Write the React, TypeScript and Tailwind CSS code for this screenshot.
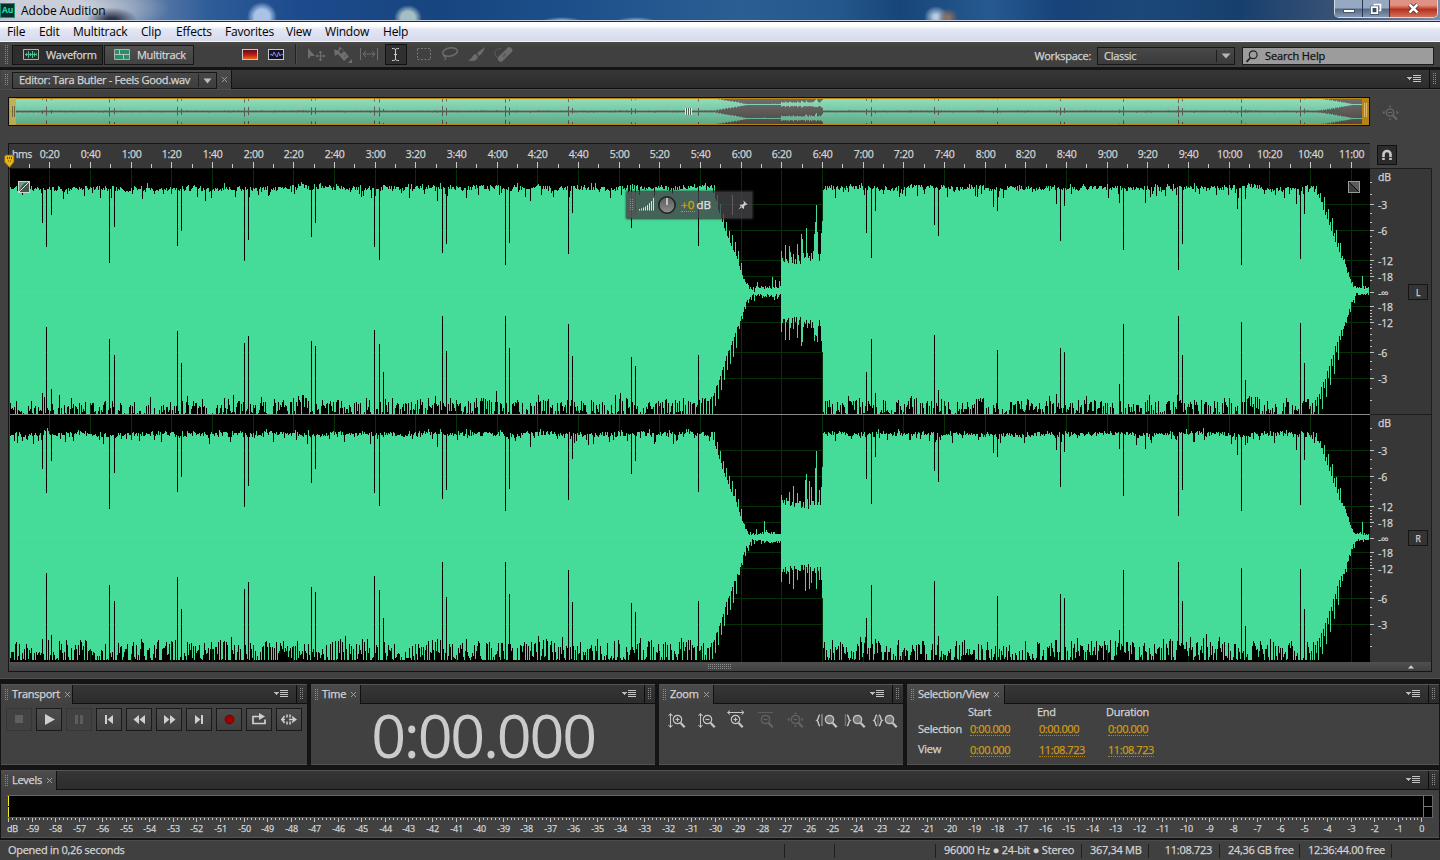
import React from 'react';

/* ---------- waveform data ---------- */

function makeRandom(seed: number) {
  let s = seed;
  return () => {
    s = (s * 1664525 + 1013904223) % 4294967296;
    return s / 4294967296;
  };
}

// x, end of the upper notch, start of the lower notch (0 = none)
const NOTCHES: number[][] = [
  [42, 223, 393], [46, 247, 327], [51, 215, 389], [59, 0, 395], [109, 263, 339], [114, 227, 355],
  [177, 246, 331], [181, 231, 363], [187, 0, 396], [244, 261, 343], [248, 240, 336], [311, 237, 341],
  [315, 223, 346], [374, 247, 330], [379, 260, 344], [383, 0, 372], [437, 201, 0], [442, 253, 316],
  [446, 244, 351], [505, 265, 316], [509, 243, 348], [530, 201, 0], [568, 254, 324], [572, 213, 356],
  [631, 228, 357], [635, 215, 366], [698, 246, 355], [866, 233, 372], [871, 258, 339], [875, 211, 393],
  [934, 225, 335], [938, 236, 390], [993, 207, 0], [997, 211, 350], [1056, 204, 394], [1060, 241, 348],
  [1064, 206, 352], [1119, 203, 384], [1123, 250, 324], [1145, 203, 0], [1178, 270, 316], [1182, 244, 355],
  [1237, 209, 0], [1241, 265, 322], [1245, 199, 380], [1296, 204, 0], [1300, 259, 323], [1304, 214, 363],
];

function lerp(points: number[][], x: number) {
  for (let i = 1; i < points.length; i++) {
    if (x <= points[i][0]) {
      const [x0, y0] = points[i - 1];
      const [x1, y1] = points[i];
      return y0 + ((y1 - y0) * (x - x0)) / (x1 - x0);
    }
  }
  return points[points.length - 1][1];
}

const FADE_TOP = [[713, 187], [718, 204], [726, 228], [735, 248], [740, 264], [744, 279], [749, 286], [755, 289]];
const FADE_BOTTOM = [[706, 408], [712, 402], [719, 384], [727, 358], [736, 336], [741, 316], [746, 302], [752, 295]];
const END_TOP = [[1315, 187], [1322, 201], [1330, 222], [1338, 245], [1345, 262], [1350, 279], [1355, 288]];
const END_BOTTOM = [[1312, 408], [1320, 396], [1330, 368], [1339, 339], [1346, 320], [1351, 303], [1356, 294]];

// Returns [top, bottom] for every pixel column between x = 10 and x = 1368.
function makeWave(seed: number, deep: boolean): number[][] {
  const rnd = makeRandom(seed);
  const out: number[][] = [];
  let drift = 0;
  for (let x = 10; x < 1369; x++) {
    const a = rnd();
    const b = rnd();
    const c = rnd();
    drift = drift * 0.9 + (rnd() - 0.5) * 1.4;
    let top = 185.5 + drift * 0.8 + a * 5 + (c > 0.86 ? b * 9 : 0) - (c < 0.08 ? 2.5 : 0);
    top = Math.max(181, top);
    let bottom = 414;
    if (deep) {
      bottom = b > 0.74 ? 414 : 394 + drift * 2 + a * 20 - (c > 0.92 ? 5 : 0);
    } else {
      bottom = b > 0.74 ? 414 : 399 + drift * 2 + a * 15 - (c > 0.92 ? 6 : 0);
    }
    if (x >= 713 && x < 755) {
      top = lerp(FADE_TOP, x) + (x % 3 === 0 ? -7 : 4) * (x < 742 ? 1 : 0.2) + a * 3;
    }
    if (x >= 706 && x < 755) {
      bottom = lerp(FADE_BOTTOM, x) + (x % 3 === 1 ? 11 : -6) * (x < 738 ? 1 : 0.3) + a * 3;
    }
    if (x >= 755 && x < 781) {
      top = 289 - a * 3 - (c > 0.82 ? b * 12 : 0);
      bottom = 294 + b * 3 + (c < 0.15 ? 3 : 0);
    }
    if (x >= 781 && x < 823) {
      const grow = (x - 781) / 41;
      top = 264 - a * 12 - (x % 4 === 1 || c > 0.8 ? b * (16 + 18 * grow) : 0);
      bottom = 317 + a * 11 + (x % 4 === 1 || c > 0.8 ? b * 25 : 0);
      if (x === 816) top = 205;
      if (x === 815) top = 222;
      if (x === 806) top = 228;
      if (x === 822) top = 221;
      if (x === 822) bottom = 352;
    }
    if (x >= 1315) {
      top = lerp(END_TOP, x) + (x % 4 === 0 ? -10 : x % 2 ? 4 : -2) * (x < 1342 ? 1 : 0.2) * (x < 1322 ? 0.4 : 1) + a * 3;
      bottom = lerp(END_BOTTOM, x) + (x % 4 === 2 ? 16 : x % 2 ? -6 : 3) * (x < 1342 ? 1 : 0.2) + b * 3;
      if (x > 1354) {
        top = 289 - a * 3;
        bottom = 293 + b * 3;
        if (x === 1362) top = 276;
      }
    }
    bottom = Math.min(414, bottom);
    out.push([Math.round(top), Math.round(bottom)]);
  }
  for (const [x, t, b] of NOTCHES) {
    const col = out[x - 10];
    if (t) col[0] = t;
    if (b) col[1] = b;
  }
  return out;
}

const LEFT = makeWave(77, false);
const RIGHT = makeWave(4242, true);

function columns(wave: number[][], dy: number) {
  return wave.map(([t, b], i) => `M${i + 1.5} ${t + dy - 169}V${b + dy - 169}`).join('');
}

function overviewColumns(wave: number[][], mid: number, half: number) {
  return wave
    .map(([t, b], i) => {
      const up = Math.min(1, (292 - t) / 102);
      const down = Math.min(1, (b - 292) / 114);
      return `M${i + 1.5} ${(mid - Math.max(0.5, up * half)).toFixed(1)}V${(mid + Math.max(0.5, down * half)).toFixed(1)}`;
    })
    .join('');
}

const MAJOR = Array.from({ length: 33 }, (_, i) => Math.floor(9.2 + 40.665 * (i + 1)));
const MINOR = Array.from({ length: 33 }, (_, i) => Math.floor(9.2 + 40.665 * (i + 0.5)));
const timeLabel = (i: number) => {
  const s = (i + 1) * 20;
  return `${Math.floor(s / 60)}:${String(s % 60).padStart(2, '0')}`;
};

const DB_ROWS: [string, number][] = [
  ['-3', 204], ['-6', 230], ['-12', 260], ['-18', 276], ['-∞', 292], ['-18', 306], ['-12', 322], ['-6', 352], ['-3', 378],
];
const DB_MINOR = [182, 194, 213, 222, 236, 242, 248, 254, 264, 267, 270, 273, 280, 310, 313, 316, 319, 328, 334, 340, 346, 361, 369, 388, 400];

const AXIS_TEXT = 'fill-[#d4d4d4] stroke-[#d4d4d4] [stroke-width:0.25]';

/* ---------- shared pieces ---------- */

function Grip({ className = '' }: { className?: string }) {
  return (
    <svg width="4" height="12" viewBox="0 0 4 12" shapeRendering="crispEdges" className={`shrink-0 ${className}`}>
      {[0, 2, 4, 6, 8, 10].map((y) => (
        <path key={y} d={`M0 ${y + 0.5}h1M2 ${y + 0.5}h1`} stroke="#8b8b8b" />
      ))}
    </svg>
  );
}

function CloseX() {
  return (
    <svg width="7" height="7" viewBox="0 0 7 7" className="shrink-0">
      <path d="M1 1l5 5M6 1l-5 5" stroke="#a5a5a5" strokeWidth="0.9" />
    </svg>
  );
}

function MenuIcon() {
  return (
    <svg width="14" height="9" viewBox="0 0 14 9" shapeRendering="crispEdges">
      <path d="M0 2h5L2.5 5z" fill="#b9b9b9" />
      <path d="M6 .5h8M6 2.5h8M6 4.5h8M6 6.500h8" stroke="#c4c4c4" />
    </svg>
  );
}

function HeaderRest() {
  return (
    <div className="flex h-[19px] flex-1 border-b border-l border-[#111] bg-linear-to-b from-[#363636] to-[#2c2c2c]">
      <div className="flex flex-1 items-center justify-end pr-[8px]">
        <MenuIcon />
      </div>
      <div className="flex w-[11px] items-center justify-center border-l border-[#0c0c0c]">
        <Grip />
      </div>
    </div>
  );
}

function Panel({ title, tab, className, children }: { title: string; tab: string; className: string; children: React.ReactNode }) {
  return (
    <section className={`flex flex-col border-t border-b border-[#545454] bg-[#414141] ${className}`}>
      <header className="flex h-[19px]">
        <div className={`flex items-center gap-[5px] bg-linear-to-b from-[#4b4b4b] to-[#414141] pl-1 ${tab}`}>
          <Grip />
          <span className="-mr-px -ml-[2px] whitespace-nowrap">{title}</span>
          <CloseX />
        </div>
        <HeaderRest />
      </header>
      {children}
    </section>
  );
}

/* ---------- title bar, menu, tool bar ---------- */

function TitleBar() {
  return (
    <div className="relative flex h-[22px] items-center justify-between overflow-hidden border-b border-[#1d2c48] bg-[#1c4a80] [-webkit-text-stroke:0]">
      <div className="absolute inset-0 bg-[radial-gradient(ellipse_28px_14px_at_112px_20px,#2d3346_15%,transparent_90%),radial-gradient(ellipse_125px_30px_at_45px_8px,#c9ced8_35%,transparent_100%),radial-gradient(ellipse_15px_15px_at_262px_17px,#a9c3e8_50%,transparent_100%),radial-gradient(ellipse_14px_13px_at_408px_18px,#a4bfc4_50%,transparent_100%),radial-gradient(ellipse_20px_4px_at_562px_21px,#8fa8c8_20%,transparent_100%),radial-gradient(ellipse_20px_4px_at_636px_21px,#8fa8c8_20%,transparent_100%),radial-gradient(ellipse_10px_10px_at_948px_18px,#96705c_10%,transparent_100%),radial-gradient(ellipse_12px_11px_at_936px_17px,#b5cbe0_20%,transparent_100%),linear-gradient(90deg,#8c9db8_0px,#6d86ac_130px,#2d5c99_210px,#1d4a8c_300px,#17457f_440px,#1c4f8a_560px,#2b5f93_740px,#24578b_840px,#174579_900px,#265a90_990px,#17427a_1060px,#1b4877_1140px,#173f6e_1240px,#3a5374_1340px,#7b8da6_1440px)]" />
      <div className="relative flex items-center gap-[6px]">
        <div className="flex h-[15px] w-[15px] items-center justify-center border border-[#1f8f78] bg-[#06302b] text-[8.5px] font-bold tracking-[-0.2px] text-[#2fd8ae]">Au</div>
        <span className="text-[12px] tracking-[-0.15px] text-black">Adobe Audition</span>
      </div>
      <div className="relative mr-[2px] flex h-[18px] w-[104px] self-start overflow-hidden rounded-b-[5px] border border-t-0 border-[#d3dae5]">
        <div className="flex w-[28px] items-center justify-center border-r border-[#26374f] bg-linear-to-b from-[#96a8c2] from-45% via-[#566b89] via-55% to-[#8798b1]">
          <span className="mt-1 h-[4px] w-[12px] border border-[#4a5567] bg-white" />
        </div>
        <div className="flex w-[27px] items-center justify-center border-r border-[#26374f] bg-linear-to-b from-[#96a8c2] from-45% via-[#566b89] via-55% to-[#8798b1]">
          <svg width="12" height="12" viewBox="0 0 12 12" fill="none">
            <path d="M4.5 1.5h6v6h-6z" stroke="#fff" strokeWidth="1.6" />
            <path d="M1.7 4.2h5.6v6H1.7z" stroke="#3c4a60" strokeWidth="3" />
            <path d="M1.7 4.2h5.6v6H1.7z" fill="#3c4a60" stroke="#fff" strokeWidth="1.8" />
          </svg>
        </div>
        <div className="flex flex-1 items-center justify-center bg-linear-to-b from-[#df9183] from-30% via-[#b5301a] via-55% to-[#d4705a]">
          <svg width="13" height="11" viewBox="0 0 13 11">
            <path d="M2.5 1.5l8 8M10.5 1.5l-8 8" stroke="#3d2b30" strokeWidth="4" />
            <path d="M2.5 1.5l8 8M10.5 1.5l-8 8" stroke="#fff" strokeWidth="2.5" />
          </svg>
        </div>
      </div>
      <div className="absolute inset-x-0 bottom-0 h-px bg-[#c4d0e2]" />
    </div>
  );
}

const MENU: [string, string][] = [
  ['File', 'w-[32px]'], ['Edit', 'w-[34px]'], ['Multitrack', 'w-[68px]'], ['Clip', 'w-[35px]'], ['Effects', 'w-[49px]'],
  ['Favorites', 'w-[61px]'], ['View', 'w-[39px]'], ['Window', 'w-[58px]'], ['Help', 'w-[40px]'],
];

function MenuBar() {
  return (
    <nav className="flex h-5 items-center border-b border-[#f3f4fa] bg-linear-to-b from-white from-20% via-[#e3e6f3] via-40% to-[#d6daec] pt-px pl-[7px] text-[12px] tracking-[-0.2px] text-black [-webkit-text-stroke:0]">
      {MENU.map(([m, w]) => (
        <span key={m} className={`whitespace-nowrap ${w}`}>{m}</span>
      ))}
    </nav>
  );
}

function ToolIcons() {
  return (
    <svg width="280" height="25" viewBox="240 42 280 25" fill="none" className="ml-[46px]">
      <defs>
        <linearGradient id="heat" x1="0" y1="0" x2="0" y2="1">
          <stop offset="0" stopColor="#5b0a1c" />
          <stop offset="0.5" stopColor="#b31d12" />
          <stop offset="1" stopColor="#f26a1b" />
        </linearGradient>
      </defs>
      <rect x="242.500" y="49.500" width="15" height="10" fill="url(#heat)" stroke="#c9c9c9" />
      <rect x="268.500" y="49.500" width="15" height="10" fill="#14141c" stroke="#c9c9c9" />
      <path d="M270 55l1.500-1 1 2 1.500-4 1.500 3 1.500 2 1.500-5 1.500 4 1.500-2 1.500 1" stroke="#8683ff" strokeWidth="1" />
      <path d="M295.500 44v20" stroke="#222" />
      <path d="M296.500 44v20" stroke="#4d4d4d" />
      <g stroke="#6e6e6e" fill="none">
        <path d="M308 48v11l3-3h4z" fill="#6e6e6e" stroke="none" />
        <path d="M320.500 51.500v9M316 56h9M319 53l1.500-2 1.500 2M319 59l1.500 2 1.500-2M318 54.500l-2 1.500 2 1.500M323 54.500l2 1.500-2 1.500" />
        <path d="M334 49.500l4 1 2-4 9 10-5 4.500-6-7-3 2z" fill="#6e6e6e" stroke="none" />
        <path d="M339 51l2.500-2 2 2.500-2.500 2zM344 56.500l2-1.500" stroke="#414141" fill="#414141" strokeWidth="0.600" />
        <path d="M352 59v4h-4z" fill="#6e6e6e" stroke="none" />
        <path d="M360.500 48v12M377.500 48v12M363 54h12M366 51l-3 3 3 3M372 51l3 3-3 3" />
      </g>
      <rect x="385.500" y="44.500" width="21" height="20" fill="#303030" stroke="#111" />
      <path d="M392 48.500c2 0 3.500 0 3.500 1.500v9c0 1.500-1.500 1.500-3.500 1.500M399 48.500c-2 0-3.500 0-3.500 1.500M399 60.500c-2 0-3.500 0-3.500-1.500M394 54.500h3" stroke="#d0d0d0" />
      <rect x="417.500" y="48.500" width="13" height="11" stroke="#777" strokeDasharray="2 1.500" />
      <g stroke="#6c6c6c" strokeWidth="1.500">
        <ellipse cx="450" cy="52" rx="7.500" ry="4" transform="rotate(-10 450 52)" />
        <path d="M444 54c-1.500 2 1 3 2 2.500M445.500 57c1 1 0 2-1 3" strokeWidth="1.200" />
      </g>
      <path d="M485 47l-8 6 2 3c3-2 5-6 6-9zM476 54c-4 0-3 5-8 6 4 2 9 1 10-3z" fill="#6c6c6c" />
      <g transform="rotate(-45 505 54.500)">
        <rect x="496" y="51.500" width="18" height="6" rx="3" fill="#6c6c6c" />
        <path d="M502 53.500h4v2h-4z" fill="#585858" />
      </g>
      <path d="M497 57a4.500 4.500 0 0 1 4-8" stroke="#777" strokeDasharray="1 1" />
    </svg>
  );
}

function ToolBar() {
  return (
    <div className="flex h-[25px] items-center bg-linear-to-b from-[#4a4a45] to-[#404040] to-20% pl-[5px]">
      <svg width="7" height="20" viewBox="0 0 7 20" shapeRendering="crispEdges">
        <path d="M.5 0v20M2.500 0v20" stroke="#858585" strokeDasharray="1 1" />
      </svg>
      <div className="flex h-[20px] w-[91px] items-center border border-[#141414] bg-[#2d2d2d] pl-[10px]">
        <svg width="16" height="11" viewBox="0 0 16 11" fill="none">
          <path d="M.5.5h15v10H.5z" stroke="#a8b4ad" />
          <path d="M2 5.500h12M3.500 4v3M5.500 2v7M7.500 4v3M9.500 2v7M11.500 3.500v4M13.500 4.500v2" stroke="#40c993" />
        </svg>
        <span className="mt-px ml-[7px]">Waveform</span>
      </div>
      <div className="ml-px flex h-[20px] w-[90px] items-center border border-[#171717] bg-linear-to-b from-[#505050] to-[#424242] pl-[9px]">
        <svg width="16" height="11" viewBox="0 0 16 11">
          <path d="M.5.5h15v10H.5z" fill="#2c8f68" stroke="#a8b4ad" />
          <path d="M1 5.500h14M5.500 1v4.500M9.500 5.500V10" stroke="#b7c4bd" />
        </svg>
        <span className="mt-px ml-[7px]">Multitrack</span>
      </div>
      <ToolIcons />
      <span className="mt-[3px] ml-auto">Workspace:</span>
      <div className="mt-[3px] ml-[6px] flex h-[18px] w-[138px] items-center border border-[#171717] bg-linear-to-b from-[#484848] to-[#3b3b3b] pl-[6px]">
        <span>Classic</span>
        <span className="ml-auto h-[12px] w-px bg-[#1d1d1d]" />
        <svg width="17" height="6" viewBox="0 0 17 6"><path d="M4.500.500h9L9 5.500z" fill="#b5b5b5" /></svg>
      </div>
      <div className="mt-[3px] mr-[6px] ml-[7px] flex h-[18px] w-[192px] items-center border border-[#1b1b1b] bg-[#9c9c9c] pl-[3px] text-[#111]">
        <svg width="12" height="13" viewBox="0 0 12 13" fill="none" stroke="#222">
          <circle cx="7.200" cy="4.800" r="3.900" strokeWidth="1.200" />
          <path d="M4.300 7.800L.5 12" strokeWidth="1.800" />
        </svg>
        <span className="ml-[7px] tracking-[-0.12px]">Search Help</span>
      </div>
    </div>
  );
}

/* ---------- editor ---------- */

function ZoomFullIcon({ color = '#696969' }: { color?: string }) {
  return (
    <svg width="17" height="16" viewBox="0 0 17 16" fill="none" stroke={color}>
      <circle cx="8" cy="7.500" r="3.700" strokeWidth="1.300" />
      <path d="M11 10.500l4 4" strokeWidth="2" />
      <path d="M6 7.500h4" />
      <path d="M2.500 5.500v4L.3 7.500zM14.500 5.500v4l2.200-2zM6.500 2h3L8 .2zM6.500 13.500h3L8 15.500z" fill={color} stroke="none" />
    </svg>
  );
}

function Overview() {
  return (
    <svg width="1362" height="29" viewBox="8 97 1362 29" className="shrink-0">
      <defs>
        <linearGradient id="ovBg" x1="0" y1="0" x2="0" y2="1">
          <stop offset="0" stopColor="#707070" />
          <stop offset="1" stopColor="#4d4545" />
        </linearGradient>
        <linearGradient id="ovWave" gradientUnits="userSpaceOnUse" x1="0" y1="98" x2="0" y2="125">
          <stop offset="0" stopColor="#92dfbd" />
          <stop offset="0.550" stopColor="#74c3a0" />
          <stop offset="1" stopColor="#5aa585" />
        </linearGradient>
      </defs>
      <rect x="8" y="97" width="1362" height="29" fill="#0b0b0b" />
      <rect x="9" y="98" width="1360" height="27" fill="url(#ovBg)" />
      <g transform="translate(9 0)" stroke="url(#ovWave)" fill="none">
        <path d={overviewColumns(LEFT, 104.5, 6.4)} />
        <path d={overviewColumns(RIGHT, 118.5, 6.4)} />
      </g>
      <path d="M10 111.500H713M823 111.500H1340" stroke="#5a5a55" strokeWidth="1.600" />
      <path d="M9 98.500H1369M9 124.500H1369" stroke="#b98712" />
      <rect x="9" y="98" width="7" height="27" fill="#c8a94c" opacity="0.850" />
      <path d="M12.500 106v11M14.500 106v11" stroke="#6f6338" />
      <rect x="1362" y="98" width="7" height="27" fill="#b4841a" />
      <path d="M1364.500 103v14M1366.500 103v14" stroke="#dcbc6a" />
      <path d="M685.500 108v7M687.500 108v7M689.500 108v7M691.500 108v7" stroke="#d6f5e6" />
      <path d="M686.500 108v7M688.500 108v7M690.500 108v7" stroke="#4f5f58" />
    </svg>
  );
}

function TimeRuler() {
  return (
    <svg width="1362" height="25" viewBox="8 143 1362 25" className="relative z-10 shrink-0 overflow-visible" fontSize="10.5">
      <rect x="8" y="143" width="1362" height="25" fill="#383838" />
      <path d="M8.500 168v-24.500H1370" stroke="#161616" fill="none" />
      <path d={MAJOR.map((x) => `M${x + 0.5} 162v6`).join('') + MINOR.map((x) => `M${x + 0.5} 164v4`).join('')} stroke="#c9c9c9" shapeRendering="crispEdges" />
      <text x="12" y="158" textLength="20" className={AXIS_TEXT}>hms</text>
      {MAJOR.map((x, i) => (
        <text key={x} x={x + 0.6} y="158" textAnchor="middle" letterSpacing="-0.3" className={AXIS_TEXT}>{timeLabel(i)}</text>
      ))}
      <path d="M4.500 157q0-2 2-2h5.500q2 0 2 2v5l-4.500 5.500-5-5.500z" fill="#e7b416" stroke="#7c5c07" strokeWidth="0.700" />
      <path d="M7.500 157v2M9.500 157v2M11.500 157v2M8.500 160.500v1M10.500 160.500v1" stroke="#5b4408" strokeWidth="0.900" />
    </svg>
  );
}

function Waveforms() {
  const grid = DB_ROWS.map(([, y]) => y - 169 + 0.5);
  return (
    <svg width="1361" height="493" viewBox="0 0 1361 493" shapeRendering="crispEdges" className="block">
      <rect width="1361" height="493" fill="#000" />
      <g stroke="#043204">
        <path d={MAJOR.map((x) => `M${x - 9 + 0.5} 0v493`).join('')} />
        <path d={grid.map((y) => `M0 ${y}h1361M0 ${y + 246}h1361`).join('')} />
      </g>
      <g stroke="#45dc99">
        <path d={columns(LEFT, 0)} />
        <path d={columns(RIGHT, 246)} />
      </g>
      <g stroke="#5be0a6" opacity="0.350">
        <path d="M1 122.500h738M773 122.500h580M1 368.500h738M773 368.500h580" />
      </g>
      <path d="M0 245.500h1361" stroke="#8b8b8b" />
      <path d="M.5 0v493" stroke="#b8140c" />
      <g shapeRendering="auto">
        <rect x="9.500" y="12.500" width="11" height="11" fill="#6f9a87" stroke="#c7d6cf" />
        <path d="M10 23C12 15 17 13 20 13v10z" fill="#3c4540" opacity="0.800" />
        <path d="M10 23L20 13" stroke="#dfe8e3" />
        <rect x="1339.500" y="12.500" width="11" height="11" fill="#5c5c5c" stroke="#9a9a9a" />
        <path d="M1340 13l10 10h-10z" fill="#3a3f3a" />
        <path d="M1340 13l10 10" stroke="#0c0c0c" />
      </g>
    </svg>
  );
}

function DbScale() {
  return (
    <svg width="62" height="494" viewBox="1370 168 62 494" className="block shrink-0" fontSize="10.5" letterSpacing="-0.2">
      <rect x="1370" y="168" width="62" height="494" fill="#373737" />
      <path d="M1370 168.500h61.500V662M1370 414.500h61" stroke="#1c1c1c" fill="none" />
      {[0, 246].map((dy, ch) => (
        <g key={dy}>
          <path d={DB_ROWS.map(([, y]) => `M1370 ${y + dy + 0.5}h4`).join('') + DB_MINOR.map((y) => `M1370 ${y + dy + 0.5}h2`).join('')} stroke="#bdbdbd" shapeRendering="crispEdges" />
          <text x="1378" y={181 + dy} className={AXIS_TEXT}>dB</text>
          {DB_ROWS.map(([t, y], i) => (
            <text key={i} x="1378" y={y + dy + 4.6} className={AXIS_TEXT}>{t}</text>
          ))}
          <rect x="1408.500" y={284.5 + dy} width="19" height="15" fill="#343434" stroke="#151515" />
          <text x="1418" y={296 + dy} fontSize="8.5" textAnchor="middle" className={AXIS_TEXT}>{ch ? 'R' : 'L'}</text>
        </g>
      ))}
    </svg>
  );
}

function Hud() {
  return (
    <div className="absolute top-[192px] left-[627px] z-20 flex h-[26px] w-[125px] items-center bg-[#434346]/80 shadow-[0_0_2px_1px_#333]">
      <div className="flex h-full w-[9px] items-center justify-center bg-[#555]/70"><Grip /></div>
      <svg width="17" height="14" viewBox="0 0 17 14" className="mb-[3px] ml-[2px]">
        <path d="M1.500 12v1.500M3.500 11.500v2M5.500 10.500v3M7.500 9.500v4M9.500 8v5.500M11.500 6v7.500M13.500 4v9.500M15.500 1v12.500" stroke="#d6e2dc" />
      </svg>
      <svg width="20" height="20" viewBox="0 0 20 20" className="mb-px ml-[2px]">
        <defs>
          <linearGradient id="knob" x1="0" y1="0" x2="0" y2="1">
            <stop offset="0" stopColor="#5a5a5a" />
            <stop offset="1" stopColor="#8e8e8e" />
          </linearGradient>
        </defs>
        <circle cx="10" cy="10" r="8.200" fill="url(#knob)" stroke="#1e2220" strokeWidth="1.600" />
        <path d="M10 3v7" stroke="#f0f0f0" strokeWidth="1.300" />
      </svg>
      <span className="ml-[4px] border-b border-dotted border-[#c8930e] text-[11.5px] leading-[13px] tracking-[0.2px] text-[#d69b0d] [-webkit-text-stroke:0.4px]">+0</span>
      <span className="mb-px ml-[2px] text-[11.5px] leading-[14px] tracking-[-0.2px] text-[#e2e2e2]">dB</span>
      <span className="ml-auto h-[20px] w-px bg-[#5e5e5e]" />
      <svg width="10" height="10" viewBox="0 0 10 10" className="mr-[4px] ml-[5px]">
        <path d="M5.500.500l4 4-1 .500-.500-.500-2 2 .200 1.800-.900.700L1.800 5.500l.700-.900 1.800.200 2-2-.800-1zM3 6L.300 9.700 4 7z" fill="#cfcfcf" />
      </svg>
    </div>
  );
}

function Editor() {
  return (
    <section className="flex h-[609px] flex-col border-b border-[#505050] bg-[#414141] pl-px">
      <header className="flex h-[19px]">
        <div className="flex w-[230px] items-center bg-linear-to-b from-[#4b4b4b] to-[#414141] pl-[4px]">
          <Grip />
          <div className="mt-[2px] ml-[3px] flex h-[17px] w-[205px] items-center border border-[#171717] bg-linear-to-b from-[#484848] to-[#3d3d3d] pl-[6px]">
            <span className="whitespace-nowrap tracking-[-0.32px]">Editor: Tara Butler - Feels Good.wav</span>
            <span className="ml-auto h-[13px] w-px bg-[#222]" />
            <svg width="17" height="6" viewBox="0 0 17 6"><path d="M4.500.500h8L8.500 5.500z" fill="#bdbdbd" /></svg>
          </div>
          <div className="ml-[4px]"><CloseX /></div>
        </div>
        <HeaderRest />
      </header>
      <div className="flex h-[37px] items-end border-t border-[#4d4d4d] pl-[7px]">
        <Overview />
        <div className="mb-[5px] ml-[12px]"><ZoomFullIcon /></div>
      </div>
      <div className="mt-[17px] flex h-[25px] pl-[7px]">
        <TimeRuler />
        <div className="mt-[2px] ml-[7px] flex h-[20px] w-[20px] items-center justify-center border border-[#101010] bg-[#2b2b2b]">
          <svg width="12" height="12" viewBox="0 0 12 12" fill="none">
            <path d="M2.500 11V5.500a3.500 3.500 0 0 1 7 0V11" stroke="#c9c9c9" strokeWidth="2.600" />
            <path d="M1 8.500h3.500M7.500 8.500H11" stroke="#2b2b2b" strokeWidth="0.800" />
          </svg>
        </div>
      </div>
      <div className="flex h-[494px] pl-[7px]">
        <div className="w-[1362px] border-t border-l border-[#161616]"><Waveforms /></div>
        <DbScale />
      </div>
      <div className="ml-[7px] flex h-[10px] w-[1424px] items-center border-r border-b border-l border-[#161616] bg-linear-to-b from-[#4f4f4f] to-[#414141]">
        <svg width="24" height="5" viewBox="0 0 24 5" shapeRendering="crispEdges" className="ml-[699px]">
          <path d="M0 .5h24M0 2.500h24M0 4.500h24" stroke="#8a8a8a" strokeDasharray="1 1" />
        </svg>
        <svg width="6" height="4" viewBox="0 0 6 4" className="mr-[17px] ml-auto"><path d="M0 3.500h6L3 .3z" fill="#d2d2d2" /></svg>
      </div>
    </section>
  );
}

/* ---------- lower panels ---------- */

const TRANSPORT: { d: React.ReactNode; off?: boolean }[] = [
  { d: <path d="M8 6h8v8H8z" fill="#5f5f5f" />, off: true },
  { d: <path d="M8 5l10 5.500L8 16z" fill="#cfcfcf" /> },
  { d: <path d="M8 6h3v9H8zM13 6h3v9h-3z" fill="#5c5c5c" />, off: true },
  { d: <path d="M8 6h2v9H8zM16 6v9l-5.500-4.500z" fill="#cfcfcf" /> },
  { d: <path d="M12 6v9l-5.500-4.500zM18 6v9l-5.500-4.500z" fill="#cfcfcf" /> },
  { d: <path d="M7 6v9l5.500-4.500zM13 6v9l5.500-4.500z" fill="#cfcfcf" /> },
  { d: <path d="M8 6v9l5.500-4.500zM14 6h2v9h-2z" fill="#cfcfcf" /> },
  { d: <circle cx="12.500" cy="10.500" r="4.500" fill="#9b0000" stroke="#5d0a0a" strokeWidth="0.800" /> },
  { d: <><path d="M9 7.500H6v7h12v-4" stroke="#cfcfcf" strokeWidth="1.700" fill="none" /><path d="M8 6.700h4V4l6 3.500-6 3.500V8.300H8z" fill="#cfcfcf" /></> },
  { d: <><path d="M7.500 7L5 10.500 7.500 14M4 10.500h4M10 5.500v3M10 12.500v3M13 5.500v3M13 12.500v3M12 10.500h5" stroke="#cfcfcf" strokeWidth="1.500" fill="none" /><path d="M14.500 6.500l5.500 4-5.500 4 1.500-4z" fill="#cfcfcf" /></> },
];

function Transport() {
  return (
    <div className="mt-[4px] ml-[5px] flex gap-[4px]">
      {TRANSPORT.map((b, i) => (
        <div key={i} className={b.off ? 'h-[23px] w-[26px] border border-[#363636]' : 'h-[23px] w-[26px] border border-[#191919] bg-linear-to-b from-[#4d4d4d] to-[#414141]'}>
          <svg width="24" height="21" viewBox="0 0 24 21">{b.d}</svg>
        </div>
      ))}
    </div>
  );
}

function Magnifier({ x, sign, color = '#c6c6c6' }: { x: number; sign: '+' | '-' | 'o'; color?: string }) {
  return (
    <g stroke={color} fill="none" transform={`translate(${x} 712)`}>
      <circle cx="5.500" cy="6.500" r="4.200" strokeWidth="1.200" fill={sign === 'o' ? '#777' : 'none'} />
      <path d="M8.700 10l4 4.300" strokeWidth="2.200" />
      {sign !== 'o' && <path d={sign === '+' ? 'M3.500 6.500h4M5.500 4.500v4' : 'M3.500 6.500h4'} strokeWidth="1.200" />}
    </g>
  );
}

function Brace({ x, flip }: { x: number; flip?: boolean }) {
  return (
    <path transform={flip ? `translate(${x} 713.500) scale(-1 0.900)` : `translate(${x} 713.500) scale(1 0.900)`} d="M4 .5C2 .5 3 5.500 1 6.500 3 7.500 2 12.500 4 12.500" stroke="#c6c6c6" strokeWidth="1.500" fill="none" />
  );
}

function ZoomTools() {
  return (
    <svg width="238" height="26" viewBox="664 708 238 26" className="mt-[5px] ml-[5px]">
      <path d="M670.500 713v13M668.500 715l2-2.500 2 2.500M668.500 724l2 2.500 2-2.500" stroke="#c6c6c6" fill="none" />
      <Magnifier x={672} sign="+" />
      <path d="M700.500 713v13M698.500 715l2-2.500 2 2.500M698.500 724l2 2.500 2-2.500" stroke="#c6c6c6" fill="none" />
      <Magnifier x={702} sign="-" />
      <path d="M728 711.500h15M730 709.500l-2.500 2 2.500 2M741.500 709.500l2.500 2-2.500 2" stroke="#c6c6c6" fill="none" />
      <Magnifier x={730} sign="+" />
      <path d="M758 711.500h15" stroke="#5d5d5d" />
      <Magnifier x={760} sign="-" color="#646464" />
      <path d="M789.500 716.500v4l-2.200-2zM801.500 716.500v4l2.200-2zM794 713h3l-1.500-1.800zM794 724.500h3l-1.500 2z" fill="#646464" />
      <Magnifier x={790} sign="-" color="#646464" />
      <Brace x={816} /><path d="M822 713v12" stroke="#8a8a8a" strokeWidth="1.500" />
      <Magnifier x={824} sign="o" />
      <path d="M845.500 713v12" stroke="#6f6f6f" strokeWidth="1.500" /><Brace x={851} flip />
      <Magnifier x={852} sign="o" />
      <Brace x={873} /><Brace x={883} flip /><path d="M878 714v11" stroke="#8a8a8a" />
      <Magnifier x={884} sign="o" />
    </svg>
  );
}

function Hot({ children }: { children: string }) {
  return (
    <span className="justify-self-start border-b border-dotted border-[#b5850f] leading-[13px] tracking-[-0.43px] text-[#d09a14]">{children}</span>
  );
}

function SelectionView() {
  return (
    <div className="grid grid-cols-[52px_69px_69px_60px] grid-rows-[16px_18px_23px] items-center pl-[11px]">
      <span />
      <span className="-ml-[2px]">Start</span>
      <span className="-ml-[2px]">End</span>
      <span className="-ml-[2px]">Duration</span>
      <span>Selection</span>
      <Hot>0:00.000</Hot>
      <Hot>0:00.000</Hot>
      <Hot>0:00.000</Hot>
      <span>View</span>
      <Hot>0:00.000</Hot>
      <Hot>11:08.723</Hot>
      <Hot>11:08.723</Hot>
    </div>
  );
}

const LEVEL_X = (i: number) => 8.4 + 23.557 * i;
const LEVEL_MAJOR = Array.from({ length: 61 }, (_, i) => Math.round(LEVEL_X(i) - 0.4));
const LEVEL_MINOR = Array.from({ length: 360 }, (_, i) => Math.round(LEVEL_X(i / 6) - 0.4));

function Levels() {
  return (
    <svg width="1431" height="47" viewBox="5 790 1431 47" className="block" fontSize="9" letterSpacing="-0.15">
      <path d="M7 795.500h1425.500V818" stroke="#686868" fill="none" />
      <rect x="8" y="796" width="1424" height="21" fill="#000" />
      <path d="M7 817.500h1425" stroke="#5a5a5a" />
      <path d="M1423.500 796v21M1424 806.500h8" stroke="#767676" />
      <path d="M8.500 796v10M8.500 807v10" stroke="#f4ef16" />
      <path d={LEVEL_MAJOR.map((x) => `M${x + 0.5} 818v4`).join('') + LEVEL_MINOR.map((x) => `M${x + 0.5} 818v2`).join('')} stroke="#c2c2c2" shapeRendering="crispEdges" />
      <text x="7" y="832" className={AXIS_TEXT}>dB</text>
      {LEVEL_MAJOR.slice(1).map((x, i) => (
        <text key={x} x={x + 0.7} y="832" textAnchor="middle" className={AXIS_TEXT}>{i === 59 ? '0' : String(i - 59)}</text>
      ))}
    </svg>
  );
}

function StatusBar() {
  const cell = 'flex h-[14px] items-center border-l border-[#1f1f1f] whitespace-nowrap';
  return (
    <footer className="flex h-[20px] items-center border-t border-[#4c4c4c] bg-[#404040] pl-[8px]">
      <span>Opened in 0,26 seconds</span>
      <div className={`${cell} ml-auto w-[50px]`} />
      <div className={`${cell} w-[101px]`} />
      <div className={`${cell} w-[146px] pl-[8px] tracking-[-0.2px]`}>96000 Hz ● 24-bit ● Stereo</div>
      <div className={`${cell} w-[67px] pl-[8px]`}>367,34 MB</div>
      <div className={`${cell} w-[71px] justify-end pr-[7px]`}>11:08.723</div>
      <div className={`${cell} w-[80px] pl-[8px]`}>24,36 GB free</div>
      <div className={`${cell} w-[92px] pl-[8px] tracking-[-0.35px]`}>12:36:44.00 free</div>
      <div className={`${cell} w-[49px]`} />
    </footer>
  );
}

export default function App() {
  return (
    <div className="relative flex h-[860px] w-[1440px] flex-col overflow-hidden bg-[#141414] font-['Open_Sans','Noto_Sans',sans-serif] text-[11px] tracking-[-0.29px] text-[#d4d4d4] [-webkit-text-stroke:0.25px]">
      <TitleBar />
      <MenuBar />
      <ToolBar />
      <div className="h-[3px]" />
      <Editor />
      <div className="mt-[5px] flex h-[81px] gap-[4px] pr-px pl-px">
        <Panel title="Transport" tab="w-[71px]" className="w-[306px]">
          <Transport />
        </Panel>
        <Panel title="Time" tab="w-[49px]" className="w-[344px]">
          <div className="flex flex-1 items-center justify-center pb-[4px] text-[61px] leading-none font-normal tracking-[-2.2px] text-[#cbcbcb] [-webkit-text-stroke:0]">0:00.000</div>
        </Panel>
        <Panel title="Zoom" tab="w-[54px]" className="w-[244px]">
          <ZoomTools />
        </Panel>
        <Panel title="Selection/View" tab="w-[97px]" className="flex-1">
          <SelectionView />
        </Panel>
      </div>
      <div className="mt-[5px] flex h-[68px] pr-px pl-px">
        <Panel title="Levels" tab="w-[55px]" className="flex-1">
          <div className="pl-[4px]"><Levels /></div>
        </Panel>
      </div>
      <div className="h-[2px]" />
      <StatusBar />
      <Hud />
    </div>
  );
}
